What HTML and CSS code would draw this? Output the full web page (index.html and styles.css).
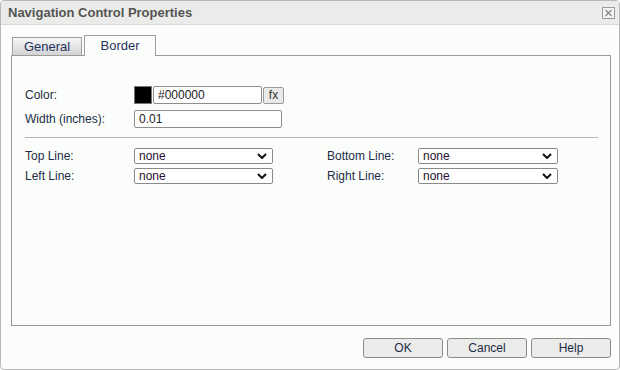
FILE: index.html
```html
<!DOCTYPE html>
<html lang="en">
<head>
<meta charset="UTF-8">
<title>Navigation Control Properties</title>
<link rel="stylesheet" href="styles.css">
</head>
<body>

<div class="dialog">
  <div class="titlebar">
    <span class="title">Navigation Control Properties</span>
    <svg class="close" width="13" height="12" viewBox="0 0 13 12">
      <rect x="0.5" y="0.5" width="12" height="11" fill="#f4f4f2" stroke="#9a9a9a"/>
      <path d="M3.5 3 L9.5 9 M9.5 3 L3.5 9" stroke="#8a8a8a" stroke-width="1.4"/>
    </svg>
  </div>

  <div class="content">
    <div class="tabs">
      <div class="tab">General</div>
      <div class="tab active">Border</div>
    </div>

    <div class="panel">
      <div class="row">
        <label class="lbl">Color:</label>
        <span class="swatch"></span>
        <span class="input color-input">#000000</span>
        <span class="fx">fx</span>
      </div>
      <div class="row">
        <label class="lbl">Width (inches):</label>
        <span class="input width-input">0.01</span>
      </div>

      <div class="rule"></div>

      <div class="lines">
        <label class="lbl">Top Line:</label>
        <div class="select"><span>none</span><svg width="10" height="6" viewBox="0 0 10 6"><path d="M1 1 L5 5 L9 1" fill="none" stroke="#111" stroke-width="2"/></svg></div>
        <label class="lbl lbl-right">Bottom Line:</label>
        <div class="select"><span>none</span><svg width="10" height="6" viewBox="0 0 10 6"><path d="M1 1 L5 5 L9 1" fill="none" stroke="#111" stroke-width="2"/></svg></div>

        <label class="lbl">Left Line:</label>
        <div class="select"><span>none</span><svg width="10" height="6" viewBox="0 0 10 6"><path d="M1 1 L5 5 L9 1" fill="none" stroke="#111" stroke-width="2"/></svg></div>
        <label class="lbl lbl-right">Right Line:</label>
        <div class="select"><span>none</span><svg width="10" height="6" viewBox="0 0 10 6"><path d="M1 1 L5 5 L9 1" fill="none" stroke="#111" stroke-width="2"/></svg></div>
      </div>
    </div>

    <div class="buttons">
      <button>OK</button>
      <button>Cancel</button>
      <button>Help</button>
    </div>
  </div>
</div>

</body>
</html>
```

FILE: styles.css
```css
body {
    margin: 0;
    font-family: "Liberation Sans", Arial, sans-serif;
    font-size: 12px;
    color: #222c48;
    background: #ffffff;
}

.dialog {
    width: 620px;
    height: 370px;
    box-sizing: border-box;
    border: 1px solid #b8b8b8;
    border-radius: 4px;
    background: #fbfdfa;
    display: flex;
    flex-direction: column;
    overflow: hidden;
}

.titlebar {
    flex-shrink: 0;
    height: 23px;
    background: #ebece9;
    border-bottom: 1px solid #d7d8d6;
    display: flex;
    align-items: center;
    justify-content: space-between;
    padding: 0 4px 0 7px;
}

.title {
    font-weight: bold;
    font-size: 13px;
    color: #555555;
}

.close {
    display: block;
    margin-top: 1px;
}

.content {
    flex: 1;
    display: flex;
    flex-direction: column;
    padding: 10px 8px 0 10px;
}

.tabs {
    flex-shrink: 0;
    display: flex;
    align-items: flex-end;
    gap: 2px;
    padding-left: 1px;
    height: 20px;
    position: relative;
    z-index: 1;
}

.tab {
    height: 18px;
    width: 70px;
    box-sizing: border-box;
    border: 1px solid #a0a0a0;
    border-bottom: none;
    background: linear-gradient(#f7f7f7, #d3d3d3);
    color: #1f3360;
    font-size: 13px;
    text-align: center;
    line-height: 17px;
}

.tab.active {
    height: 21px;
    width: 72px;
    margin-bottom: -1px;
    background: #fbfdfa;
    line-height: 20px;
}

.panel {
    flex-shrink: 0;
    box-sizing: border-box;
    height: 271px;
    border: 1px solid #9a9a9a;
    padding: 30px 12px 0 13px;
}

.row {
    display: flex;
    align-items: center;
    height: 18px;
    margin-bottom: 6px;
}

.lbl {
    width: 109px;
    flex-shrink: 0;
    color: #222c48;
    font-size: 12px;
}

.swatch {
    width: 16px;
    height: 16px;
    background: #000000;
    border: 1px solid #777777;
    margin-right: 1px;
}

.input {
    box-sizing: border-box;
    height: 18px;
    border: 1px solid #8e8e8e;
    border-radius: 2px;
    background: #ffffff;
    padding: 0 4px;
    line-height: 16px;
    color: #222;
}

.color-input {
    width: 109px;
}

.width-input {
    width: 148px;
}

.fx {
    box-sizing: border-box;
    width: 21px;
    height: 17px;
    margin-left: 1px;
    border: 1px solid #999999;
    border-radius: 2px;
    background: #e9e9e8;
    text-align: center;
    line-height: 15px;
    color: #333;
    font-size: 12px;
}

.rule {
    height: 1px;
    background: #b4b4b4;
    margin: 9px 0 10px;
}

.lines {
    display: grid;
    grid-template-columns: 109px 139px 145px 140px;
    grid-auto-rows: 16px;
    row-gap: 4px;
    align-items: center;
}

.lbl-right {
    width: auto;
    padding-left: 54px;
}

.select {
    box-sizing: border-box;
    height: 16px;
    border: 1px solid #8a8a8a;
    border-radius: 2px;
    background: #ffffff;
    display: flex;
    align-items: center;
    justify-content: space-between;
    padding: 0 5px 0 4px;
    color: #2a1030;
}

.buttons {
    flex-shrink: 0;
    display: flex;
    justify-content: flex-end;
    gap: 4px;
    padding-top: 12px;
}

button {
    width: 80px;
    height: 20px;
    border: 1px solid #8c8c8c;
    border-radius: 3px;
    background: #ebebea;
    font-family: "Liberation Sans", Arial, sans-serif;
    font-size: 12px;
    color: #222c48;
    padding: 0;
}
```
